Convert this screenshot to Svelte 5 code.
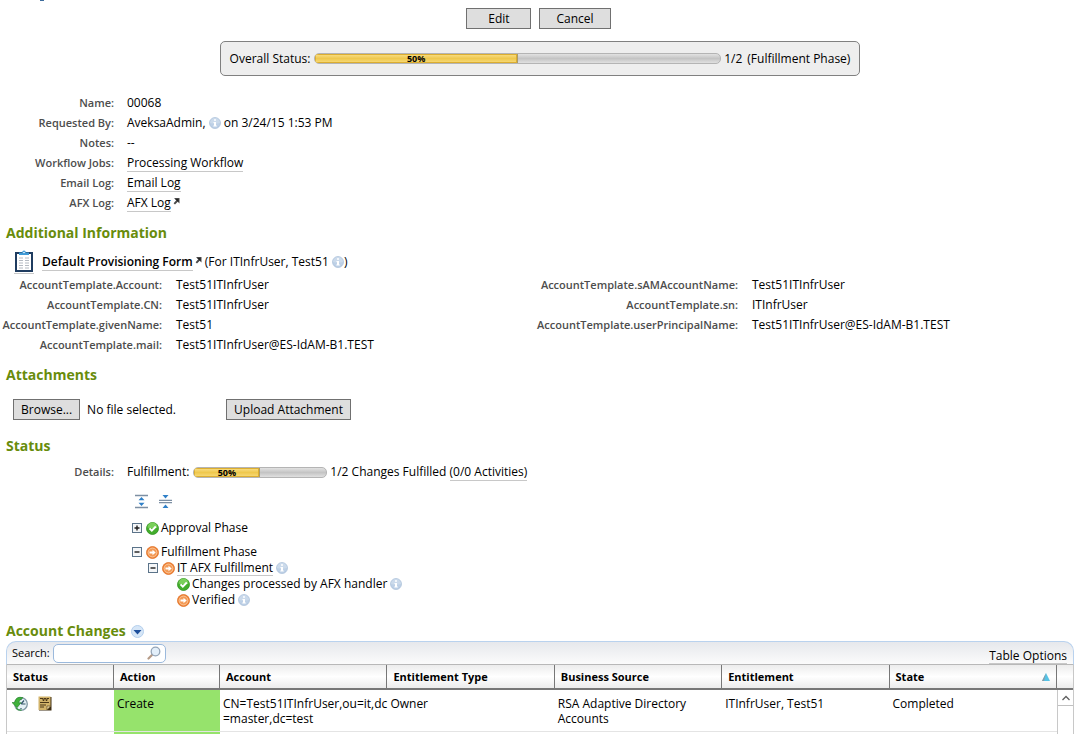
<script lang="ts">
  type Mark = 'done' | 'active';

  const account = [
    [
      ['AccountTemplate.Account:', 'Test51ITInfrUser'],
      ['AccountTemplate.CN:', 'Test51ITInfrUser'],
      ['AccountTemplate.givenName:', 'Test51'],
      ['AccountTemplate.mail:', 'Test51ITInfrUser@ES-IdAM-B1.TEST'],
    ],
    [
      ['AccountTemplate.sAMAccountName:', 'Test51ITInfrUser'],
      ['AccountTemplate.sn:', 'ITInfrUser'],
      ['AccountTemplate.userPrincipalName:', 'Test51ITInfrUser@ES-IdAM-B1.TEST'],
    ],
  ];

  const changes = [
    {
      action: 'Create',
      account: 'CN=Test51ITInfrUser,ou=it,dc=master,dc=test',
      type: 'Owner',
      source: 'RSA Adaptive Directory Accounts',
      entitlement: 'ITInfrUser, Test51',
      state: 'Completed',
    },
  ];

  let search = $state('');
  let approvalOpen = $state(false);
  let fulfillmentOpen = $state(true);
  let afxOpen = $state(true);

  function setAll(open: boolean) {
    approvalOpen = open;
    fulfillmentOpen = open;
    afxOpen = open;
  }
</script>

{#snippet info()}
  <svg class="info" width="12" height="12" viewBox="0 0 12 12" aria-label="Info">
    <circle cx="6" cy="6" r="5.5" fill="#bdd0e6" stroke="#a9bfd8" stroke-width="0.7" />
    <path d="M1 6a5 5 0 0 1 10 0q-5 1.500-10 0z" fill="#cbdaeb" />
    <path d="M5 2.300h2v1.500H5zM4.500 5H7v3.500h.8v1H4.300v-1H5V6h-.5z" fill="#fff" />
  </svg>
{/snippet}

{#snippet popout()}
  <svg class="popout" width="7" height="7" viewBox="0 0 7 7" aria-hidden="true">
    <path d="M1 0h5.500v5.500L4.700 3.700 2 6.500.6 5.200 3.300 2.300z" fill="#4a4a4a" />
    <path d="M2 1h3.500v3z" fill="#222" />
  </svg>
{/snippet}

{#snippet mark(kind: Mark)}
  <svg class="mark" width="13" height="13" viewBox="0 0 13 13" aria-hidden="true">
    {#if kind === 'done'}
      <circle cx="6.500" cy="6.500" r="6" fill="#43ad2c" stroke="#2f9220" stroke-width="0.800" />
      <path d="M1.500 5.500a5 5 0 0 1 10 0q-5 2-10 0z" fill="#79cf5a" />
      <path d="M3.500 6.300l2.300 2.400 4-4.200" fill="none" stroke="#fff" stroke-width="1.900" />
    {:else}
      <circle cx="6.500" cy="6.500" r="6" fill="#f08539" stroke="#df7126" stroke-width="0.800" />
      <circle cx="6.500" cy="6.500" r="4.400" fill="#f39a55" stroke="#fbd0aa" stroke-width="0.800" />
      <path d="M3.500 5.500h3V3.800l3.200 2.700-3.200 2.700V7.500h-3z" fill="#fff" />
    {/if}
  </svg>
{/snippet}

{#snippet toggle(open: boolean, label: string, flip: () => void)}
  <button class="toggle" aria-expanded={open} aria-label={label} onclick={flip}>
    <svg width="10" height="10" viewBox="0 0 10 10">
      <rect x="0.500" y="0.500" width="9" height="9" fill="#f4f6f8" stroke="#5b7389" />
      <path d={open ? 'M2.500 5h5' : 'M2.500 5h5M5 2.500v5'} stroke="#1c1c1c" stroke-width="1.400" />
    </svg>
  </button>
{/snippet}

{#snippet progress(value: number, label: string)}
  <div class="bar" role="progressbar" aria-label={label} aria-valuenow={value} aria-valuemin="0" aria-valuemax="100">
    <div class="fill" style="width: {value}%">{value}%</div>
  </div>
{/snippet}

<main>
  <div class="actions">
    <button class="btn">Edit</button>
    <button class="btn">Cancel</button>
  </div>

  <div class="overall">
    <span>Overall Status:</span>
    {@render progress(50, 'Overall status')}
    <span class="count">1/2</span>
    <span>(Fulfillment Phase)</span>
  </div>

  <dl class="summary">
    <dt>Name:</dt>
    <dd>00068</dd>
    <dt>Requested By:</dt>
    <dd>AveksaAdmin, {@render info()} on 3/24/15 1:53 PM</dd>
    <dt>Notes:</dt>
    <dd>--</dd>
    <dt>Workflow Jobs:</dt>
    <dd><a href="#workflow">Processing Workflow</a></dd>
    <dt>Email Log:</dt>
    <dd><a href="#email-log">Email Log</a></dd>
    <dt>AFX Log:</dt>
    <dd><a href="#afx-log">AFX Log</a>{@render popout()}</dd>
  </dl>

  <h2>Additional Information</h2>
  <div class="form-line">
    <a class="form-icon" href="#form" aria-label="Open form">
      <svg width="20" height="22" viewBox="0 0 20 22">
        <rect x="2" y="3" width="16" height="18" fill="#fff" stroke="#1f3c60" stroke-width="2" />
        <path d="M5 5V2.500h3Q8.500.5 10 .5t2 2h3V5z" fill="#3f9ad6" />
        <circle cx="10" cy="2.500" r="0.800" fill="#fff" />
        <path d="M5 8h4M5 10.500h4M5 13h4M5 15.500h4M5 18h4M11 8h4M11 10.500h4M11 13h4M11 15.500h4M11 18h4" stroke="#b4bac2" />
      </svg>
    </a>
    <span><a class="form-name" href="#form">Default Provisioning Form</a>{@render popout()} (For ITInfrUser, Test51 {@render info()})</span>
  </div>
  <div class="account">
    {#each account as column}
      <dl>
        {#each column as [label, value]}
          <dt>{label}</dt>
          <dd>{value}</dd>
        {/each}
      </dl>
    {/each}
  </div>

  <h2>Attachments</h2>
  <div class="attach">
    <button class="btn">Browse...</button>
    <span class="file">No file selected.</span>
    <button class="btn">Upload Attachment</button>
  </div>

  <h2>Status</h2>
  <dl class="summary details">
    <dt>Details:</dt>
    <dd class="fulfil">
      <span>Fulfillment:</span>
      {@render progress(50, 'Fulfillment')}
      <span>1/2 Changes Fulfilled <a href="#activities">(0/0 Activities)</a></span>
    </dd>
  </dl>

  <div class="tree">
    <div class="tree-tools">
      <button aria-label="Expand all" onclick={() => setAll(true)}>
        <svg width="13" height="15" viewBox="0 0 13 15">
          <path d="M0 1.500h13M0 13.500h13" stroke="#7d8fa3" stroke-width="1.300" />
          <path d="M3.500 6.300h6l-3-3.300zM3.500 8.700h6l-3 3.300z" fill="#2f80c8" />
        </svg>
      </button>
      <button aria-label="Collapse all" onclick={() => setAll(false)}>
        <svg width="13" height="15" viewBox="0 0 13 15">
          <path d="M0 6.300h13M0 8.700h13" stroke="#7d8fa3" stroke-width="1.200" />
          <path d="M3.500 1h6l-3 3.500zM3.500 14h6l-3-3.500z" fill="#2f80c8" />
        </svg>
      </button>
    </div>
    <ul>
      <li class="phase">
        <div class="node">
          {@render toggle(approvalOpen, 'Approval Phase', () => (approvalOpen = !approvalOpen))}
          {@render mark('done')}<span>Approval Phase</span>
        </div>
      </li>
      <li class="phase">
        <div class="node">
          {@render toggle(fulfillmentOpen, 'Fulfillment Phase', () => (fulfillmentOpen = !fulfillmentOpen))}
          {@render mark('active')}<span>Fulfillment Phase</span>
        </div>
        {#if fulfillmentOpen}
          <ul>
            <li>
              <div class="node">
                {@render toggle(afxOpen, 'IT AFX Fulfillment', () => (afxOpen = !afxOpen))}
                {@render mark('active')}<a href="#afx">IT AFX Fulfillment</a>{@render info()}
              </div>
              {#if afxOpen}
                <ul class="leaves">
                  <li class="node">{@render mark('done')}<span>Changes processed by AFX handler</span>{@render info()}</li>
                  <li class="node">{@render mark('active')}<span>Verified</span>{@render info()}</li>
                </ul>
              {/if}
            </li>
          </ul>
        {/if}
      </li>
    </ul>
  </div>

  <h2 class="changes-title">
    Account Changes
    <button class="menu" aria-label="Account changes menu">
      <svg width="13" height="13" viewBox="0 0 13 13">
        <circle cx="6.500" cy="6.500" r="6" fill="#d6e6f7" stroke="#b4cfec" />
        <path d="M2.500 5h8l-4 4.500z" fill="#1d4f9c" />
      </svg>
    </button>
  </h2>

  <section class="grid">
    <div class="toolbar">
      <label for="search">Search:</label>
      <div class="search">
        <input id="search" type="text" bind:value={search} />
        <svg width="14" height="14" viewBox="0 0 14 14" aria-hidden="true">
          <path d="M1.500 12.500l4-4" stroke="#b59a86" stroke-width="2.200" stroke-linecap="round" />
          <circle cx="8.500" cy="5.500" r="4.300" fill="#e3effa" stroke="#94a5b8" stroke-width="1.300" />
        </svg>
      </div>
      <a class="options" href="#options">Table Options</a>
    </div>
    <table>
      <colgroup>
        <col class="c-status" />
        <col class="c-action" />
        <col span="5" />
        <col class="c-scroll" />
      </colgroup>
      <thead>
        <tr>
          <th>Status</th>
          <th>Action</th>
          <th>Account</th>
          <th>Entitlement Type</th>
          <th>Business Source</th>
          <th>Entitlement</th>
          <th>
            <div class="sorted">
              State
              <svg width="8" height="8" viewBox="0 0 8 8" aria-label="Sorted ascending">
                <path d="M4 0l4 8H0z" fill="#55c3e6" />
                <path d="M4 0L0 8h2z" fill="#8a9aa5" />
              </svg>
            </div>
          </th>
          <th></th>
        </tr>
      </thead>
      <tbody>
        {#each changes as row, i}
          <tr>
            <td>
              <div class="row-icons">
                <svg width="16" height="16" viewBox="0 0 16 16" aria-label="History">
                  <circle cx="9" cy="8" r="6.300" fill="#e4f0f5" stroke="#7f97a3" stroke-width="1.300" />
                  <path d="M9 8l3-3.500M9 8h3.500M9 3v1M9 12v1M13.500 8h-1" stroke="#33566b" stroke-width="1.200" />
                  <path d="M0 6.500l5 5.200 4-5H6.500Q7.500 3.500 11 1.700 4-.3 2.500 6.500z" fill="#3fb13a" stroke="#1f7d24" stroke-width="0.600" />
                  <path d="M4 12q2 2.500 5.500 2" fill="none" stroke="#3f9a4a" stroke-width="1.300" />
                </svg>
                <svg width="14" height="15" viewBox="0 0 14 15" aria-label="Notes">
                  <path d="M1 1h12.500v13.500H1z" fill="#3d2c12" />
                  <path d="M.5.5h12v10l-3.500 3.500H.5z" fill="#d2b36a" />
                  <path d="M2 2.500h3v2h1v-2h2v2h1v-2h2M2 6.500h9M2 9h6M2 11h4" fill="none" stroke="#4a3717" />
                  <path d="M12.500 10L9 14v-4z" fill="#f4e2ab" stroke="#4a3717" stroke-width="0.600" />
                </svg>
              </div>
            </td>
            <td class="create">{row.action}</td>
            <td>{row.account}</td>
            <td>{row.type}</td>
            <td>{row.source}</td>
            <td>{row.entitlement}</td>
            <td>{row.state}</td>
            {#if i === 0}
              <td class="scroll" rowspan={changes.length + 1}>
                <button aria-label="Scroll up">
                  <svg width="8" height="6" viewBox="0 0 8 6">
                    <path d="M0.500 5L4 1.500 7.500 5" fill="none" stroke="#606060" stroke-width="1.300" />
                  </svg>
                </button>
              </td>
            {/if}
          </tr>
        {/each}
        <tr>
          <td></td>
          <td class="create"></td>
          <td></td>
          <td></td>
          <td></td>
          <td></td>
          <td></td>
        </tr>
      </tbody>
    </table>
  </section>
</main>

<style>
  :global(body) {
    margin: 0;
    background: #fff;
  }

  main {
    display: flex;
    flex-direction: column;
    position: relative;
    box-sizing: border-box;
    height: 100vh;
    overflow: hidden;
    padding: 8px 6px 0;
    font: 12px/20px 'Open Sans', 'Noto Sans', sans-serif;
    color: #000;
  }

  /* tail of the page title scrolled off the top */
  main::before {
    content: '';
    position: absolute;
    top: 0;
    left: 40px;
    width: 4px;
    height: 1px;
    background: #3d6c9c;
  }

  main > * {
    flex-shrink: 0;
  }

  button,
  input {
    font: inherit;
    color: inherit;
  }

  button {
    padding: 0;
    border: 0;
    background: none;
    cursor: pointer;
  }

  svg {
    display: block;
  }

  a {
    color: inherit;
    text-decoration: none;
    border-bottom: 1px solid #c8c8c8;
  }

  h2 {
    margin: 10px 0 0;
    font-size: 14px;
    font-weight: 700;
    line-height: 20px;
    color: #688c0c;
  }

  dl,
  dd,
  ul {
    margin: 0;
    padding: 0;
  }

  ul {
    list-style: none;
  }

  dt {
    font-size: 11px;
    font-weight: 600;
    color: #4d4d4d;
    text-align: right;
    white-space: nowrap;
  }

  .info,
  .popout {
    display: inline-block;
    vertical-align: -2px;
  }

  .popout {
    margin-left: 2px;
    vertical-align: 2px;
  }

  .btn {
    box-sizing: border-box;
    height: 21px;
    padding: 0 7px;
    border: 1px solid #707070;
    background: #dedede;
    line-height: 19px;
    white-space: nowrap;
  }

  .actions {
    display: flex;
    justify-content: center;
    gap: 8px;
    margin-right: 3px;
  }

  .actions .btn {
    min-width: 65px;
    padding: 0 16px;
  }

  .overall {
    display: flex;
    align-items: center;
    box-sizing: border-box;
    width: 60%;
    min-width: 640px;
    height: 35px;
    margin: 12px auto 0;
    padding: 0 9px;
    border: 1px solid #808080;
    border-radius: 5px;
    background: #eee;
    white-space: nowrap;
  }

  .overall .bar {
    flex: 1;
    margin: 0 3px 0 4px;
  }

  .count {
    margin-right: 5px;
  }

  .bar {
    box-sizing: border-box;
    height: 11px;
    overflow: hidden;
    border: 1px solid #b4b4b4;
    border-radius: 5px;
    background: linear-gradient(#e2e2e2, #c4c4c4 50%, #e0e0e0);
  }

  .fill {
    box-sizing: border-box;
    height: 9px;
    border-right: 1px solid #a99a6a;
    background: linear-gradient(#f9e08a, #efc84e 50%, #f8dc7c);
    box-shadow: inset 0 0 0 1px #dcae30;
    font-size: 9px;
    font-weight: 700;
    line-height: 9px;
    text-align: center;
  }

  .summary {
    display: grid;
    grid-template-columns: 108px 1fr;
    column-gap: 13px;
    margin-top: 17px;
  }

  .form-line {
    display: flex;
    align-items: center;
    gap: 8px;
    height: 24px;
    margin: 7px 0 1px 8px;
  }

  .form-icon {
    padding-bottom: 1px;
  }

  .form-name {
    font-weight: 600;
  }

  .account {
    display: grid;
    grid-template-columns: 1fr 1fr;
  }

  .account dl {
    display: grid;
    grid-template-columns: 156px 1fr;
    column-gap: 14px;
    align-content: start;
  }

  .account dl + dl {
    grid-template-columns: 198px 1fr;
  }

  .account dt {
    display: flex;
    justify-content: flex-end;
  }

  .attach {
    display: flex;
    align-items: center;
    margin: 14px 0 6px 7px;
  }

  .file {
    width: 139px;
    margin-left: 7px;
  }

  .details {
    margin-top: 6px;
  }

  .fulfil {
    display: flex;
    align-items: center;
  }

  .fulfil .bar {
    width: 134px;
    margin: 0 3px 0 4px;
  }

  .tree {
    margin: 12px 0 0 126px;
    line-height: 16px;
  }

  .tree-tools {
    display: flex;
    gap: 11px;
    margin-left: 3px;
  }

  .phase {
    padding-top: 8px;
  }

  .phase:first-child {
    padding-top: 11px;
  }

  .node {
    display: flex;
    align-items: center;
    height: 16px;
  }

  .node a {
    line-height: 15px;
  }

  .node .mark {
    margin-right: 2px;
  }

  .node .info {
    margin-left: 3px;
  }

  .toggle {
    margin-right: 4px;
  }

  li ul {
    margin-left: 16px;
  }

  li .leaves {
    margin-left: 29px;
  }

  .changes-title {
    display: flex;
    align-items: center;
    gap: 5px;
    margin-top: 13px;
  }

  .toolbar {
    display: flex;
    align-items: center;
    box-sizing: border-box;
    height: 24px;
    padding: 0 6px 0 5px;
    border: 1px solid #b9d2ee;
    border-bottom: 1px solid #b8b8b8;
    border-radius: 10px 10px 0 0;
    background: linear-gradient(#e6e8ec, #fbfbfb);
  }

  label {
    margin-right: 3px;
    font-size: 11px;
  }

  .search {
    display: flex;
    align-items: center;
    box-sizing: border-box;
    width: 113px;
    height: 19px;
    padding: 0 4px;
    border: 1px solid #9bb9dc;
    border-radius: 5px;
    background: #fff;
  }

  .search input {
    flex: 1;
    min-width: 0;
    height: 15px;
    padding: 0;
    border: 0;
    outline: 0;
    background: none;
  }

  .options {
    margin: 5px 0 0 auto;
    line-height: 15px;
  }

  table {
    width: 100%;
    table-layout: fixed;
    border-collapse: separate;
    border-spacing: 0;
    border: solid #c8c8c8;
    border-width: 0 1px;
  }

  .c-status {
    width: 107px;
  }

  .c-action {
    width: 106px;
  }

  .c-scroll {
    width: 16px;
  }

  th {
    height: 25px;
    box-sizing: border-box;
    padding: 0 6px;
    border-right: 1px solid #777;
    border-bottom: 2px solid #777;
    background: linear-gradient(#ececec, #fff 50%, #ececec);
    font-size: 11px;
    font-weight: 700;
    line-height: 20px;
    text-align: left;
    white-space: nowrap;
  }

  th:last-child {
    padding: 0;
    border-right: 0;
  }

  .sorted {
    display: flex;
    align-items: center;
    justify-content: space-between;
  }

  td {
    box-sizing: border-box;
    height: 42px;
    padding: 6px 0 5px 3px;
    border-bottom: 1px solid #e4e4e4;
    line-height: 15px;
    vertical-align: top;
    overflow-wrap: anywhere;
  }

  .create {
    background: #96e36c;
  }

  .row-icons {
    display: flex;
    gap: 10px;
    padding-left: 2px;
  }

  .scroll {
    padding: 0;
    border-left: 1px solid #c8c8c8;
  }

  .scroll button {
    display: flex;
    align-items: center;
    justify-content: center;
    width: 100%;
    height: 16px;
    border-bottom: 1px solid #c0c0c0;
  }
</style>
